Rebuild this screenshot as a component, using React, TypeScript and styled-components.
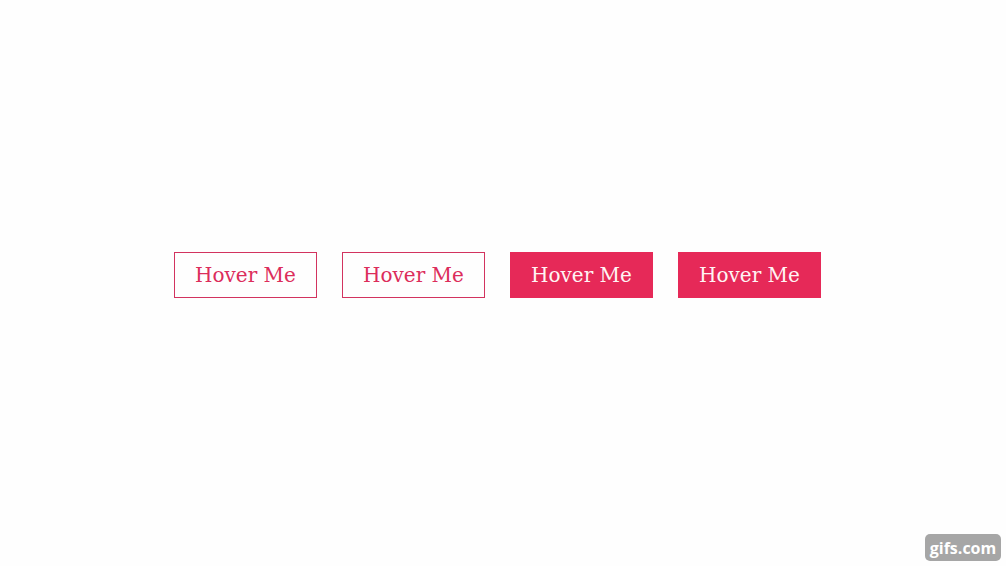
import styled, { createGlobalStyle } from 'styled-components';

const GlobalStyle = createGlobalStyle`
  html, body {
    margin: 0;
    padding: 0;
    background: #fefefe;
  }
`;

const labels = ['outline', 'outline', 'filled', 'filled'] as const;

const App = () => {
    return (
        <>
            <GlobalStyle />
            <Page>
                <ButtonRow>
                    {labels.map((kind, index) => (
                        <HoverButton key={index} $filled={kind === 'filled'}>
                            Hover Me
                        </HoverButton>
                    ))}
                </ButtonRow>
                <Watermark>gifs.com</Watermark>
            </Page>
        </>
    );
};

const Page = styled.div`
  position: relative;
  width: 1006px;
  height: 566px;
  overflow: hidden;
  background: #fefefe;
`;

const ButtonRow = styled.div`
  display: flex;
  gap: 25px;
  padding: 252px 0 0 174px;
`;

const HoverButton = styled.div<{ $filled: boolean }>`
  box-sizing: border-box;
  width: 143px;
  height: 46px;
  display: flex;
  align-items: center;
  justify-content: center;
  font-family: 'DejaVu Serif', serif;
  font-size: 20px;
  border: 1px solid ${p => (p.$filled ? '#e62958' : '#d2335f')};
  background: ${p => (p.$filled ? '#e62958' : 'transparent')};
  color: ${p => (p.$filled ? '#fff4f4' : '#dc2d5b')};
`;

const Watermark = styled.div`
  position: absolute;
  right: 5px;
  bottom: 5px;
  box-sizing: border-box;
  width: 76px;
  height: 27px;
  display: flex;
  align-items: center;
  justify-content: center;
  border-radius: 5px;
  background: #a6a6a6;
  color: #ffffff;
  font-family: 'Open Sans', sans-serif;
  font-weight: 700;
  font-size: 16px;
`;

export default App;
